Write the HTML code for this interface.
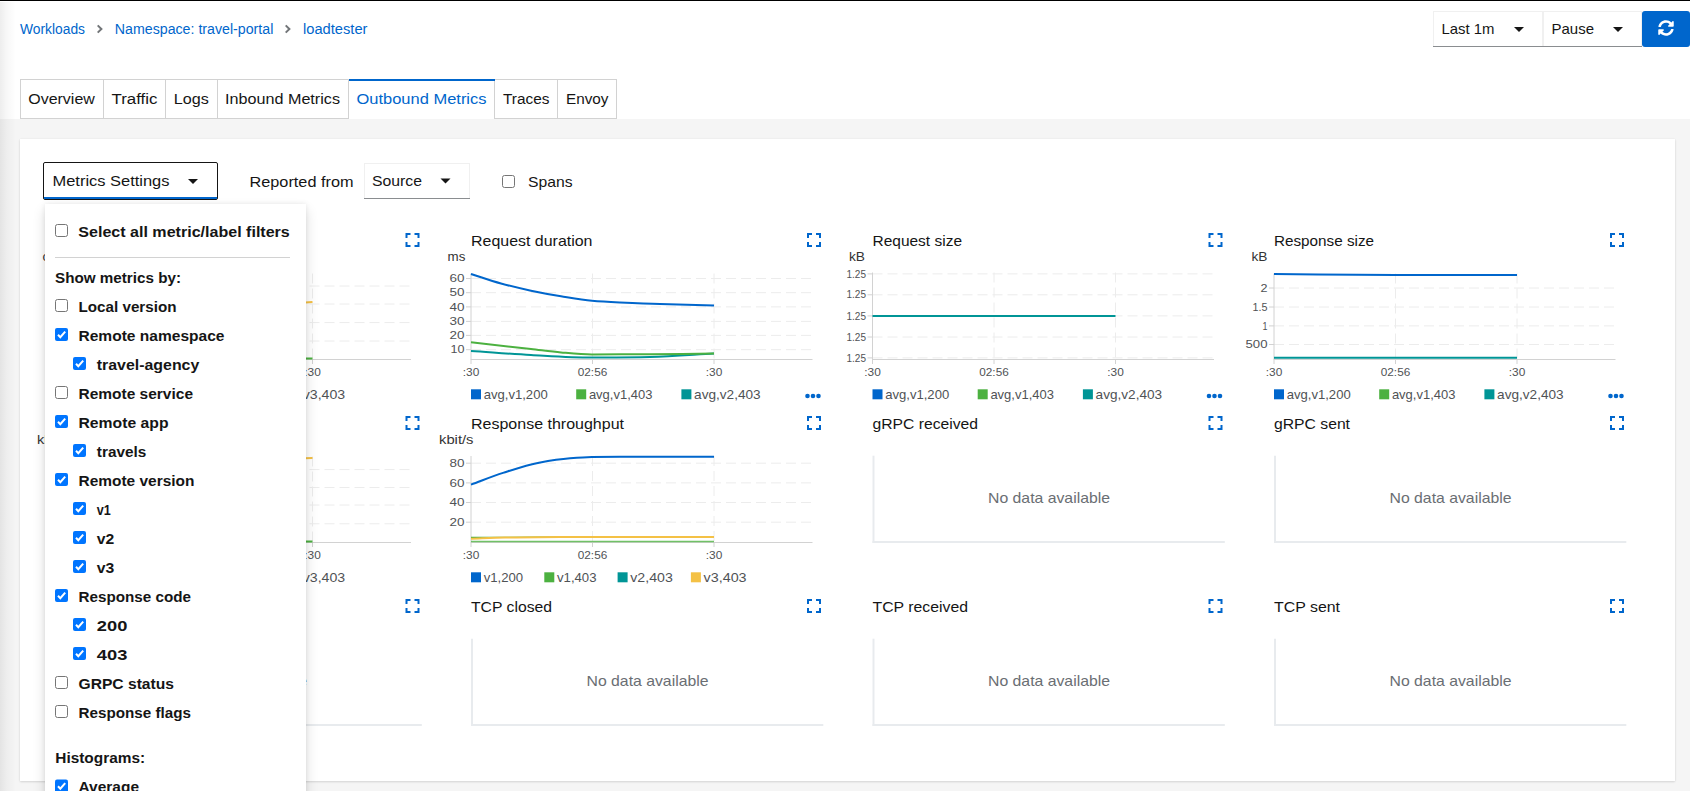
<!DOCTYPE html>
<html><head><meta charset="utf-8"><style>
html,body{margin:0;padding:0;width:1690px;height:791px;overflow:hidden;background:#fff;font-family:"Liberation Sans", sans-serif;}
.a{position:absolute;}
svg text{font-family:"Liberation Sans", sans-serif;}
</style></head><body>
<div class="a" style="left:0;top:119px;width:1690px;height:672px;background:#f5f5f5"></div>
<div class="a" style="left:20px;top:139px;width:1655px;height:642px;background:#fff;box-shadow:0 1px 2px rgba(3,3,3,.12),0 0 2px rgba(3,3,3,.06)"></div>
<svg class="a" style="left:0;top:0" width="1690" height="791" viewBox="0 0 1690 791">
<text x="20.0" y="33.8" font-size="14" fill="#0066cc" textLength="65.0" lengthAdjust="spacingAndGlyphs">Workloads</text>
<path d="M97.7 25.4L101.4 29.0L97.7 32.6" stroke="#737679" stroke-width="2" fill="none"/>
<text x="114.8" y="33.8" font-size="14" fill="#0066cc" textLength="158.5" lengthAdjust="spacingAndGlyphs">Namespace: travel-portal</text>
<path d="M285.7 25.4L289.4 29.0L285.7 32.6" stroke="#737679" stroke-width="2" fill="none"/>
<text x="303.0" y="33.8" font-size="14" fill="#0066cc" textLength="64.5" lengthAdjust="spacingAndGlyphs">loadtester</text>
<rect x="1433.5" y="11.5" width="109" height="35" fill="#fff" stroke="#f0f0f0" stroke-width="1"/>
<line x1="1433" y1="46.5" x2="1543" y2="46.5" stroke="#8a8d90" stroke-width="1"/>
<text x="1441.5" y="34.0" font-size="15" fill="#151515" textLength="53.0" lengthAdjust="spacingAndGlyphs">Last 1m</text>
<path d="M1514.0 27.0H1524.0L1519.0 32.0Z" fill="#151515"/>
<rect x="1543.5" y="11.5" width="98" height="35" fill="#fff" stroke="#f0f0f0" stroke-width="1"/>
<line x1="1543" y1="46.5" x2="1642" y2="46.5" stroke="#8a8d90" stroke-width="1"/>
<text x="1551.5" y="34.0" font-size="15" fill="#151515" textLength="42.5" lengthAdjust="spacingAndGlyphs">Pause</text>
<path d="M1613.0 27.0H1623.0L1618.0 32.0Z" fill="#151515"/>
<path d="M1645 11H1687Q1690 11 1690 14V44Q1690 47 1687 47H1645Q1642 47 1642 44V14Q1642 11 1645 11Z" fill="#0066cc"/>
<g transform="translate(1658 20) scale(0.03125)"><path fill="#fff" d="M370.72 133.28C339.458 104.008 298.888 87.962 255.848 88c-77.458.068-144.328 53.178-162.791 126.85-1.344 5.363-6.122 9.15-11.651 9.15H24.103c-7.498 0-13.194-6.807-11.807-14.176C33.933 94.924 134.813 8 256 8c66.448 0 126.791 26.136 171.315 68.685L463.03 40.97C478.149 25.851 504 36.559 504 57.941V192c0 13.255-10.745 24-24 24H345.941c-21.382 0-32.09-25.851-16.971-40.971l41.75-41.749zM32 296h134.059c21.382 0 32.09 25.851 16.971 40.971l-41.75 41.75c31.262 29.273 71.835 45.319 114.876 45.28 77.418-.07 144.315-53.144 162.787-126.849 1.344-5.363 6.122-9.15 11.651-9.15h57.304c7.498 0 13.193 6.807 11.807 14.176C478.067 417.076 377.187 504 256 504c-66.448 0-126.791-26.136-171.315-68.685L48.97 471.03C33.851 486.149 8 475.441 8 454.059V320c0-13.255 10.745-24 24-24z"/></g>
<rect x="20.5" y="79.5" width="83" height="39" fill="#fff" stroke="#d2d2d2" stroke-width="1"/>
<rect x="103.5" y="79.5" width="62" height="39" fill="#fff" stroke="#d2d2d2" stroke-width="1"/>
<rect x="165.5" y="79.5" width="52" height="39" fill="#fff" stroke="#d2d2d2" stroke-width="1"/>
<rect x="217.5" y="79.5" width="131" height="39" fill="#fff" stroke="#d2d2d2" stroke-width="1"/>
<rect x="348.5" y="79" width="146" height="40" fill="#fff"/>
<line x1="348.5" y1="79.5" x2="348.5" y2="119" stroke="#d2d2d2" stroke-width="1"/>
<line x1="494.5" y1="79.5" x2="494.5" y2="119" stroke="#d2d2d2" stroke-width="1"/>
<rect x="494.5" y="79.5" width="63" height="39" fill="#fff" stroke="#d2d2d2" stroke-width="1"/>
<rect x="557.5" y="79.5" width="59" height="39" fill="#fff" stroke="#d2d2d2" stroke-width="1"/>
<text x="28.3" y="104.0" font-size="15.5" fill="#151515" textLength="66.5" lengthAdjust="spacingAndGlyphs">Overview</text>
<text x="111.5" y="104.0" font-size="15.5" fill="#151515" textLength="46.0" lengthAdjust="spacingAndGlyphs">Traffic</text>
<text x="173.8" y="104.0" font-size="15.5" fill="#151515" textLength="35.0" lengthAdjust="spacingAndGlyphs">Logs</text>
<text x="225.0" y="104.0" font-size="15.5" fill="#151515" textLength="115.0" lengthAdjust="spacingAndGlyphs">Inbound Metrics</text>
<rect x="349" y="79" width="146" height="2" fill="#0066cc"/>
<text x="356.5" y="104.0" font-size="15.5" fill="#0066cc" textLength="130.0" lengthAdjust="spacingAndGlyphs">Outbound Metrics</text>
<text x="503.0" y="104.0" font-size="15.5" fill="#151515" textLength="46.5" lengthAdjust="spacingAndGlyphs">Traces</text>
<text x="566.0" y="104.0" font-size="15.5" fill="#151515" textLength="42.5" lengthAdjust="spacingAndGlyphs">Envoy</text>
<rect x="43.5" y="162.5" width="174" height="37" fill="#fff" stroke="#151515" stroke-width="1" rx="1.5"/>
<rect x="44" y="197" width="173" height="2" fill="#0066cc"/>
<text x="52.5" y="185.7" font-size="15" fill="#151515" textLength="117.0" lengthAdjust="spacingAndGlyphs">Metrics Settings</text>
<path d="M188.0 179.0H198.0L193.0 184.0Z" fill="#151515"/>
<text x="249.5" y="187.3" font-size="15" fill="#151515" textLength="104.0" lengthAdjust="spacingAndGlyphs">Reported from</text>
<rect x="364.5" y="163.5" width="105" height="35" fill="#fff" stroke="#f0f0f0" stroke-width="1"/>
<line x1="364" y1="198.5" x2="470" y2="198.5" stroke="#8a8d90" stroke-width="1"/>
<text x="372.0" y="186.0" font-size="15" fill="#151515" textLength="50.0" lengthAdjust="spacingAndGlyphs">Source</text>
<path d="M440.5 178.5H450.5L445.5 183.5Z" fill="#151515"/>
<rect x="502.5" y="175.5" width="12" height="12" fill="#fff" stroke="#767676" stroke-width="1" rx="2"/>
<text x="528.0" y="187.3" font-size="15" fill="#151515" textLength="44.5" lengthAdjust="spacingAndGlyphs">Spans</text>
<text x="69.5" y="246.0" font-size="15" fill="#151515" textLength="116.0" lengthAdjust="spacingAndGlyphs">Request volume</text>
<path d="M406.5 238V234H410.5M414.5 234H418.5V238M418.5 242V246H414.5M410.5 246H406.5V242" stroke="#0066cc" stroke-width="2" fill="none"/>
<text x="42.5" y="261.0" font-size="13" fill="#333" textLength="21.0" lengthAdjust="spacingAndGlyphs">ops</text>
<line x1="69.5" y1="286" x2="409.5" y2="286" stroke="#ececec" stroke-width="1" stroke-dasharray="10,5"/>
<line x1="64.5" y1="286" x2="69.5" y2="286" stroke="#d2d2d2" stroke-width="1"/>
<text x="63.0" y="289.6" font-size="11" fill="#4f5255" text-anchor="end" textLength="8.0" lengthAdjust="spacingAndGlyphs">4</text>
<line x1="69.5" y1="304" x2="409.5" y2="304" stroke="#ececec" stroke-width="1" stroke-dasharray="10,5"/>
<line x1="64.5" y1="304" x2="69.5" y2="304" stroke="#d2d2d2" stroke-width="1"/>
<text x="63.0" y="307.6" font-size="11" fill="#4f5255" text-anchor="end" textLength="8.0" lengthAdjust="spacingAndGlyphs">3</text>
<line x1="69.5" y1="322.6" x2="409.5" y2="322.6" stroke="#ececec" stroke-width="1" stroke-dasharray="10,5"/>
<line x1="64.5" y1="322.6" x2="69.5" y2="322.6" stroke="#d2d2d2" stroke-width="1"/>
<text x="63.0" y="326.2" font-size="11" fill="#4f5255" text-anchor="end" textLength="8.0" lengthAdjust="spacingAndGlyphs">2</text>
<line x1="69.5" y1="341" x2="409.5" y2="341" stroke="#ececec" stroke-width="1" stroke-dasharray="10,5"/>
<line x1="64.5" y1="341" x2="69.5" y2="341" stroke="#d2d2d2" stroke-width="1"/>
<text x="63.0" y="344.6" font-size="11" fill="#4f5255" text-anchor="end" textLength="8.0" lengthAdjust="spacingAndGlyphs">1</text>
<line x1="191.0" y1="273.5" x2="191.0" y2="359" stroke="#ececec" stroke-width="1" stroke-dasharray="10,5"/>
<line x1="312.5" y1="273.5" x2="312.5" y2="359" stroke="#ececec" stroke-width="1" stroke-dasharray="10,5"/>
<line x1="69.5" y1="273.5" x2="69.5" y2="359.5" stroke="#d2d2d2" stroke-width="1"/>
<line x1="69.5" y1="359.5" x2="411.0" y2="359.5" stroke="#d2d2d2" stroke-width="1"/>
<line x1="69.5" y1="359" x2="69.5" y2="364" stroke="#d2d2d2" stroke-width="1"/>
<line x1="191.0" y1="359" x2="191.0" y2="364" stroke="#d2d2d2" stroke-width="1"/>
<line x1="312.5" y1="359" x2="312.5" y2="364" stroke="#d2d2d2" stroke-width="1"/>
<text x="69.5" y="375.6" font-size="11" fill="#4f5255" text-anchor="middle" textLength="16.5" lengthAdjust="spacingAndGlyphs">:30</text>
<text x="191.0" y="375.6" font-size="11" fill="#4f5255" text-anchor="middle" textLength="29.5" lengthAdjust="spacingAndGlyphs">02:56</text>
<text x="312.5" y="375.6" font-size="11" fill="#4f5255" text-anchor="middle" textLength="16.5" lengthAdjust="spacingAndGlyphs">:30</text>
<path d="M69.5 330.0C110.0 324.0 150.5 316.3 191.0 312.0C231.5 307.7 272.0 305.3 312.5 302.0" stroke="#f4c145" stroke-width="2" fill="none"/>
<path d="M69.5 358.5H312.5" stroke="#4cb140" stroke-width="2" fill="none"/>
<rect x="69.5" y="389.3" width="10" height="10" fill="#0066cc"/>
<text x="82.2" y="399.0" font-size="13" fill="#4f5255" textLength="39.0" lengthAdjust="spacingAndGlyphs">v1,200</text>
<rect x="143.0" y="389.3" width="10" height="10" fill="#4cb140"/>
<text x="155.7" y="399.0" font-size="13" fill="#4f5255" textLength="39.5" lengthAdjust="spacingAndGlyphs">v1,403</text>
<rect x="216.5" y="389.3" width="10" height="10" fill="#009596"/>
<text x="229.2" y="399.0" font-size="13" fill="#4f5255" textLength="42.0" lengthAdjust="spacingAndGlyphs">v2,403</text>
<rect x="290.0" y="389.3" width="10" height="10" fill="#f4c145"/>
<text x="302.7" y="399.0" font-size="13" fill="#4f5255" textLength="42.5" lengthAdjust="spacingAndGlyphs">v3,403</text>
<text x="471.0" y="246.0" font-size="15" fill="#151515" textLength="121.5" lengthAdjust="spacingAndGlyphs">Request duration</text>
<path d="M808 238V234H812M816 234H820V238M820 242V246H816M812 246H808V242" stroke="#0066cc" stroke-width="2" fill="none"/>
<text x="447.6" y="261.0" font-size="13" fill="#333" textLength="17.8" lengthAdjust="spacingAndGlyphs">ms</text>
<line x1="471" y1="278.5" x2="811" y2="278.5" stroke="#ececec" stroke-width="1" stroke-dasharray="10,5"/>
<line x1="466" y1="278.5" x2="471" y2="278.5" stroke="#d2d2d2" stroke-width="1"/>
<text x="464.5" y="282.1" font-size="11" fill="#4f5255" text-anchor="end" textLength="15.0" lengthAdjust="spacingAndGlyphs">60</text>
<line x1="471" y1="292.7" x2="811" y2="292.7" stroke="#ececec" stroke-width="1" stroke-dasharray="10,5"/>
<line x1="466" y1="292.7" x2="471" y2="292.7" stroke="#d2d2d2" stroke-width="1"/>
<text x="464.5" y="296.3" font-size="11" fill="#4f5255" text-anchor="end" textLength="15.0" lengthAdjust="spacingAndGlyphs">50</text>
<line x1="471" y1="306.9" x2="811" y2="306.9" stroke="#ececec" stroke-width="1" stroke-dasharray="10,5"/>
<line x1="466" y1="306.9" x2="471" y2="306.9" stroke="#d2d2d2" stroke-width="1"/>
<text x="464.5" y="310.5" font-size="11" fill="#4f5255" text-anchor="end" textLength="15.0" lengthAdjust="spacingAndGlyphs">40</text>
<line x1="471" y1="321.4" x2="811" y2="321.4" stroke="#ececec" stroke-width="1" stroke-dasharray="10,5"/>
<line x1="466" y1="321.4" x2="471" y2="321.4" stroke="#d2d2d2" stroke-width="1"/>
<text x="464.5" y="325.0" font-size="11" fill="#4f5255" text-anchor="end" textLength="15.0" lengthAdjust="spacingAndGlyphs">30</text>
<line x1="471" y1="335.4" x2="811" y2="335.4" stroke="#ececec" stroke-width="1" stroke-dasharray="10,5"/>
<line x1="466" y1="335.4" x2="471" y2="335.4" stroke="#d2d2d2" stroke-width="1"/>
<text x="464.5" y="339.0" font-size="11" fill="#4f5255" text-anchor="end" textLength="15.0" lengthAdjust="spacingAndGlyphs">20</text>
<line x1="471" y1="349.7" x2="811" y2="349.7" stroke="#ececec" stroke-width="1" stroke-dasharray="10,5"/>
<line x1="466" y1="349.7" x2="471" y2="349.7" stroke="#d2d2d2" stroke-width="1"/>
<text x="464.5" y="353.3" font-size="11" fill="#4f5255" text-anchor="end" textLength="14.0" lengthAdjust="spacingAndGlyphs">10</text>
<line x1="592.5" y1="273.5" x2="592.5" y2="359" stroke="#ececec" stroke-width="1" stroke-dasharray="10,5"/>
<line x1="714" y1="273.5" x2="714" y2="359" stroke="#ececec" stroke-width="1" stroke-dasharray="10,5"/>
<line x1="471" y1="273.5" x2="471" y2="359.5" stroke="#d2d2d2" stroke-width="1"/>
<line x1="471" y1="359.5" x2="812.5" y2="359.5" stroke="#d2d2d2" stroke-width="1"/>
<line x1="471" y1="359" x2="471" y2="364" stroke="#d2d2d2" stroke-width="1"/>
<line x1="592.5" y1="359" x2="592.5" y2="364" stroke="#d2d2d2" stroke-width="1"/>
<line x1="714" y1="359" x2="714" y2="364" stroke="#d2d2d2" stroke-width="1"/>
<text x="471.0" y="375.6" font-size="11" fill="#4f5255" text-anchor="middle" textLength="16.5" lengthAdjust="spacingAndGlyphs">:30</text>
<text x="592.5" y="375.6" font-size="11" fill="#4f5255" text-anchor="middle" textLength="29.5" lengthAdjust="spacingAndGlyphs">02:56</text>
<text x="714.0" y="375.6" font-size="11" fill="#4f5255" text-anchor="middle" textLength="16.5" lengthAdjust="spacingAndGlyphs">:30</text>
<path d="M471.0 274.0C481.0 277.2 491.0 280.8 501.0 283.5C511.0 286.2 521.0 288.6 531.0 290.7C541.0 292.8 551.0 294.7 561.0 296.3C571.3 298.0 581.7 300.0 592.0 300.8C601.3 301.6 610.7 302.0 620.0 302.4C633.3 303.0 646.7 303.6 660.0 304.0C678.0 304.6 696.0 305.0 714.0 305.5" stroke="#0066cc" stroke-width="2" fill="none"/>
<path d="M471.0 351.0C491.0 352.3 511.0 354.0 531.0 355.0C551.3 356.1 571.7 357.6 592.0 357.6C611.3 357.6 630.7 357.3 650.0 357.0C671.3 356.6 692.7 354.7 714.0 353.5" stroke="#009596" stroke-width="2" fill="none"/>
<path d="M471.0 342.3C491.0 344.5 511.0 346.7 531.0 349.0C541.0 350.1 551.0 351.6 561.0 352.4C571.3 353.3 581.7 354.4 592.0 354.4C611.3 354.4 630.7 354.3 650.0 354.2C671.3 354.1 692.7 353.7 714.0 353.5" stroke="#4cb140" stroke-width="2" fill="none"/>
<rect x="471.0" y="389.3" width="10" height="10" fill="#0066cc"/>
<text x="483.7" y="399.0" font-size="13" fill="#4f5255" textLength="64.0" lengthAdjust="spacingAndGlyphs">avg,v1,200</text>
<rect x="576.2" y="389.3" width="10" height="10" fill="#4cb140"/>
<text x="588.9" y="399.0" font-size="13" fill="#4f5255" textLength="63.5" lengthAdjust="spacingAndGlyphs">avg,v1,403</text>
<rect x="681.4" y="389.3" width="10" height="10" fill="#009596"/>
<text x="694.1" y="399.0" font-size="13" fill="#4f5255" textLength="66.5" lengthAdjust="spacingAndGlyphs">avg,v2,403</text>
<circle cx="807.5" cy="396" r="2.3" fill="#0066cc"/>
<circle cx="813.0" cy="396" r="2.3" fill="#0066cc"/>
<circle cx="818.5" cy="396" r="2.3" fill="#0066cc"/>
<text x="872.5" y="246.0" font-size="15" fill="#151515" textLength="89.5" lengthAdjust="spacingAndGlyphs">Request size</text>
<path d="M1209.5 238V234H1213.5M1217.5 234H1221.5V238M1221.5 242V246H1217.5M1213.5 246H1209.5V242" stroke="#0066cc" stroke-width="2" fill="none"/>
<text x="849.0" y="261.0" font-size="13" fill="#333" textLength="16.0" lengthAdjust="spacingAndGlyphs">kB</text>
<line x1="872.5" y1="273.9" x2="1212.5" y2="273.9" stroke="#ececec" stroke-width="1" stroke-dasharray="10,5"/>
<line x1="867.5" y1="273.9" x2="872.5" y2="273.9" stroke="#d2d2d2" stroke-width="1"/>
<text x="866.0" y="277.5" font-size="11" fill="#4f5255" text-anchor="end" textLength="19.5" lengthAdjust="spacingAndGlyphs">1.25</text>
<line x1="872.5" y1="294.8" x2="1212.5" y2="294.8" stroke="#ececec" stroke-width="1" stroke-dasharray="10,5"/>
<line x1="867.5" y1="294.8" x2="872.5" y2="294.8" stroke="#d2d2d2" stroke-width="1"/>
<text x="866.0" y="298.4" font-size="11" fill="#4f5255" text-anchor="end" textLength="19.5" lengthAdjust="spacingAndGlyphs">1.25</text>
<line x1="872.5" y1="315.9" x2="1212.5" y2="315.9" stroke="#ececec" stroke-width="1" stroke-dasharray="10,5"/>
<line x1="867.5" y1="315.9" x2="872.5" y2="315.9" stroke="#d2d2d2" stroke-width="1"/>
<text x="866.0" y="319.5" font-size="11" fill="#4f5255" text-anchor="end" textLength="19.5" lengthAdjust="spacingAndGlyphs">1.25</text>
<line x1="872.5" y1="337" x2="1212.5" y2="337" stroke="#ececec" stroke-width="1" stroke-dasharray="10,5"/>
<line x1="867.5" y1="337" x2="872.5" y2="337" stroke="#d2d2d2" stroke-width="1"/>
<text x="866.0" y="340.6" font-size="11" fill="#4f5255" text-anchor="end" textLength="19.5" lengthAdjust="spacingAndGlyphs">1.25</text>
<line x1="872.5" y1="357.9" x2="1212.5" y2="357.9" stroke="#ececec" stroke-width="1" stroke-dasharray="10,5"/>
<line x1="867.5" y1="357.9" x2="872.5" y2="357.9" stroke="#d2d2d2" stroke-width="1"/>
<text x="866.0" y="361.5" font-size="11" fill="#4f5255" text-anchor="end" textLength="19.5" lengthAdjust="spacingAndGlyphs">1.25</text>
<line x1="994.0" y1="272.5" x2="994.0" y2="359" stroke="#ececec" stroke-width="1" stroke-dasharray="10,5"/>
<line x1="1115.5" y1="272.5" x2="1115.5" y2="359" stroke="#ececec" stroke-width="1" stroke-dasharray="10,5"/>
<line x1="872.5" y1="272.5" x2="872.5" y2="359.5" stroke="#d2d2d2" stroke-width="1"/>
<line x1="872.5" y1="359.5" x2="1214.0" y2="359.5" stroke="#d2d2d2" stroke-width="1"/>
<line x1="872.5" y1="359" x2="872.5" y2="364" stroke="#d2d2d2" stroke-width="1"/>
<line x1="994.0" y1="359" x2="994.0" y2="364" stroke="#d2d2d2" stroke-width="1"/>
<line x1="1115.5" y1="359" x2="1115.5" y2="364" stroke="#d2d2d2" stroke-width="1"/>
<text x="872.5" y="375.6" font-size="11" fill="#4f5255" text-anchor="middle" textLength="16.5" lengthAdjust="spacingAndGlyphs">:30</text>
<text x="994.0" y="375.6" font-size="11" fill="#4f5255" text-anchor="middle" textLength="29.5" lengthAdjust="spacingAndGlyphs">02:56</text>
<text x="1115.5" y="375.6" font-size="11" fill="#4f5255" text-anchor="middle" textLength="16.5" lengthAdjust="spacingAndGlyphs">:30</text>
<path d="M872.5 315.9H1115.5" stroke="#009596" stroke-width="2" fill="none"/>
<rect x="872.5" y="389.3" width="10" height="10" fill="#0066cc"/>
<text x="885.2" y="399.0" font-size="13" fill="#4f5255" textLength="64.0" lengthAdjust="spacingAndGlyphs">avg,v1,200</text>
<rect x="977.7" y="389.3" width="10" height="10" fill="#4cb140"/>
<text x="990.4" y="399.0" font-size="13" fill="#4f5255" textLength="63.5" lengthAdjust="spacingAndGlyphs">avg,v1,403</text>
<rect x="1082.9" y="389.3" width="10" height="10" fill="#009596"/>
<text x="1095.6" y="399.0" font-size="13" fill="#4f5255" textLength="66.5" lengthAdjust="spacingAndGlyphs">avg,v2,403</text>
<circle cx="1209.0" cy="396" r="2.3" fill="#0066cc"/>
<circle cx="1214.5" cy="396" r="2.3" fill="#0066cc"/>
<circle cx="1220.0" cy="396" r="2.3" fill="#0066cc"/>
<text x="1274.0" y="246.0" font-size="15" fill="#151515" textLength="100.0" lengthAdjust="spacingAndGlyphs">Response size</text>
<path d="M1611 238V234H1615M1619 234H1623V238M1623 242V246H1619M1615 246H1611V242" stroke="#0066cc" stroke-width="2" fill="none"/>
<text x="1251.5" y="261.0" font-size="13" fill="#333" textLength="16.0" lengthAdjust="spacingAndGlyphs">kB</text>
<line x1="1274" y1="288" x2="1614" y2="288" stroke="#ececec" stroke-width="1" stroke-dasharray="10,5"/>
<line x1="1269" y1="288" x2="1274" y2="288" stroke="#d2d2d2" stroke-width="1"/>
<text x="1267.5" y="291.6" font-size="11" fill="#4f5255" text-anchor="end" textLength="7.0" lengthAdjust="spacingAndGlyphs">2</text>
<line x1="1274" y1="307" x2="1614" y2="307" stroke="#ececec" stroke-width="1" stroke-dasharray="10,5"/>
<line x1="1269" y1="307" x2="1274" y2="307" stroke="#d2d2d2" stroke-width="1"/>
<text x="1267.5" y="310.6" font-size="11" fill="#4f5255" text-anchor="end" textLength="15.0" lengthAdjust="spacingAndGlyphs">1.5</text>
<line x1="1274" y1="325.9" x2="1614" y2="325.9" stroke="#ececec" stroke-width="1" stroke-dasharray="10,5"/>
<line x1="1269" y1="325.9" x2="1274" y2="325.9" stroke="#d2d2d2" stroke-width="1"/>
<text x="1267.5" y="329.5" font-size="11" fill="#4f5255" text-anchor="end" textLength="5.0" lengthAdjust="spacingAndGlyphs">1</text>
<line x1="1274" y1="344.5" x2="1614" y2="344.5" stroke="#ececec" stroke-width="1" stroke-dasharray="10,5"/>
<line x1="1269" y1="344.5" x2="1274" y2="344.5" stroke="#d2d2d2" stroke-width="1"/>
<text x="1267.5" y="348.1" font-size="11" fill="#4f5255" text-anchor="end" textLength="22.0" lengthAdjust="spacingAndGlyphs">500</text>
<line x1="1395.5" y1="273.5" x2="1395.5" y2="359" stroke="#ececec" stroke-width="1" stroke-dasharray="10,5"/>
<line x1="1517" y1="273.5" x2="1517" y2="359" stroke="#ececec" stroke-width="1" stroke-dasharray="10,5"/>
<line x1="1274" y1="273.5" x2="1274" y2="359.5" stroke="#d2d2d2" stroke-width="1"/>
<line x1="1274" y1="359.5" x2="1615.5" y2="359.5" stroke="#d2d2d2" stroke-width="1"/>
<line x1="1274" y1="359" x2="1274" y2="364" stroke="#d2d2d2" stroke-width="1"/>
<line x1="1395.5" y1="359" x2="1395.5" y2="364" stroke="#d2d2d2" stroke-width="1"/>
<line x1="1517" y1="359" x2="1517" y2="364" stroke="#d2d2d2" stroke-width="1"/>
<text x="1274.0" y="375.6" font-size="11" fill="#4f5255" text-anchor="middle" textLength="16.5" lengthAdjust="spacingAndGlyphs">:30</text>
<text x="1395.5" y="375.6" font-size="11" fill="#4f5255" text-anchor="middle" textLength="29.5" lengthAdjust="spacingAndGlyphs">02:56</text>
<text x="1517.0" y="375.6" font-size="11" fill="#4f5255" text-anchor="middle" textLength="16.5" lengthAdjust="spacingAndGlyphs">:30</text>
<path d="M1274.0 274.0C1314.5 274.3 1355.0 275.0 1395.5 275.0C1436.0 275.0 1476.5 275.0 1517.0 275.0" stroke="#0066cc" stroke-width="2" fill="none"/>
<path d="M1274 357.7H1517" stroke="#009596" stroke-width="2" fill="none"/>
<rect x="1274.0" y="389.3" width="10" height="10" fill="#0066cc"/>
<text x="1286.7" y="399.0" font-size="13" fill="#4f5255" textLength="64.0" lengthAdjust="spacingAndGlyphs">avg,v1,200</text>
<rect x="1379.2" y="389.3" width="10" height="10" fill="#4cb140"/>
<text x="1391.9" y="399.0" font-size="13" fill="#4f5255" textLength="63.5" lengthAdjust="spacingAndGlyphs">avg,v1,403</text>
<rect x="1484.4" y="389.3" width="10" height="10" fill="#009596"/>
<text x="1497.1" y="399.0" font-size="13" fill="#4f5255" textLength="66.5" lengthAdjust="spacingAndGlyphs">avg,v2,403</text>
<circle cx="1610.5" cy="396" r="2.3" fill="#0066cc"/>
<circle cx="1616.0" cy="396" r="2.3" fill="#0066cc"/>
<circle cx="1621.5" cy="396" r="2.3" fill="#0066cc"/>
<text x="69.5" y="429.0" font-size="15" fill="#151515" textLength="141.0" lengthAdjust="spacingAndGlyphs">Request throughput</text>
<path d="M406.5 421V417H410.5M414.5 417H418.5V421M418.5 425V429H414.5M410.5 429H406.5V425" stroke="#0066cc" stroke-width="2" fill="none"/>
<text x="37.0" y="444.0" font-size="13" fill="#333" textLength="34.0" lengthAdjust="spacingAndGlyphs">kbit/s</text>
<line x1="69.5" y1="469.6" x2="409.5" y2="469.6" stroke="#ececec" stroke-width="1" stroke-dasharray="10,5"/>
<line x1="64.5" y1="469.6" x2="69.5" y2="469.6" stroke="#d2d2d2" stroke-width="1"/>
<text x="63.0" y="473.2" font-size="11" fill="#4f5255" text-anchor="end" textLength="8.0" lengthAdjust="spacingAndGlyphs">8</text>
<line x1="69.5" y1="487.5" x2="409.5" y2="487.5" stroke="#ececec" stroke-width="1" stroke-dasharray="10,5"/>
<line x1="64.5" y1="487.5" x2="69.5" y2="487.5" stroke="#d2d2d2" stroke-width="1"/>
<text x="63.0" y="491.1" font-size="11" fill="#4f5255" text-anchor="end" textLength="8.0" lengthAdjust="spacingAndGlyphs">6</text>
<line x1="69.5" y1="505" x2="409.5" y2="505" stroke="#ececec" stroke-width="1" stroke-dasharray="10,5"/>
<line x1="64.5" y1="505" x2="69.5" y2="505" stroke="#d2d2d2" stroke-width="1"/>
<text x="63.0" y="508.6" font-size="11" fill="#4f5255" text-anchor="end" textLength="8.0" lengthAdjust="spacingAndGlyphs">4</text>
<line x1="69.5" y1="523.75" x2="409.5" y2="523.75" stroke="#ececec" stroke-width="1" stroke-dasharray="10,5"/>
<line x1="64.5" y1="523.75" x2="69.5" y2="523.75" stroke="#d2d2d2" stroke-width="1"/>
<text x="63.0" y="527.4" font-size="11" fill="#4f5255" text-anchor="end" textLength="8.0" lengthAdjust="spacingAndGlyphs">2</text>
<line x1="191.0" y1="456.5" x2="191.0" y2="542" stroke="#ececec" stroke-width="1" stroke-dasharray="10,5"/>
<line x1="312.5" y1="456.5" x2="312.5" y2="542" stroke="#ececec" stroke-width="1" stroke-dasharray="10,5"/>
<line x1="69.5" y1="456.5" x2="69.5" y2="542.5" stroke="#d2d2d2" stroke-width="1"/>
<line x1="69.5" y1="542.5" x2="411.0" y2="542.5" stroke="#d2d2d2" stroke-width="1"/>
<line x1="69.5" y1="542" x2="69.5" y2="547" stroke="#d2d2d2" stroke-width="1"/>
<line x1="191.0" y1="542" x2="191.0" y2="547" stroke="#d2d2d2" stroke-width="1"/>
<line x1="312.5" y1="542" x2="312.5" y2="547" stroke="#d2d2d2" stroke-width="1"/>
<text x="69.5" y="558.6" font-size="11" fill="#4f5255" text-anchor="middle" textLength="16.5" lengthAdjust="spacingAndGlyphs">:30</text>
<text x="191.0" y="558.6" font-size="11" fill="#4f5255" text-anchor="middle" textLength="29.5" lengthAdjust="spacingAndGlyphs">02:56</text>
<text x="312.5" y="558.6" font-size="11" fill="#4f5255" text-anchor="middle" textLength="16.5" lengthAdjust="spacingAndGlyphs">:30</text>
<path d="M69.5 483.0C110.0 476.3 150.5 465.7 191.0 463.0C231.5 460.3 272.0 459.7 312.5 458.0" stroke="#f4c145" stroke-width="2" fill="none"/>
<path d="M69.5 541.5H312.5" stroke="#4cb140" stroke-width="2" fill="none"/>
<rect x="69.5" y="572.3" width="10" height="10" fill="#0066cc"/>
<text x="82.2" y="582.0" font-size="13" fill="#4f5255" textLength="39.0" lengthAdjust="spacingAndGlyphs">v1,200</text>
<rect x="143.0" y="572.3" width="10" height="10" fill="#4cb140"/>
<text x="155.7" y="582.0" font-size="13" fill="#4f5255" textLength="39.5" lengthAdjust="spacingAndGlyphs">v1,403</text>
<rect x="216.5" y="572.3" width="10" height="10" fill="#009596"/>
<text x="229.2" y="582.0" font-size="13" fill="#4f5255" textLength="42.0" lengthAdjust="spacingAndGlyphs">v2,403</text>
<rect x="290.0" y="572.3" width="10" height="10" fill="#f4c145"/>
<text x="302.7" y="582.0" font-size="13" fill="#4f5255" textLength="42.5" lengthAdjust="spacingAndGlyphs">v3,403</text>
<text x="471.0" y="429.0" font-size="15" fill="#151515" textLength="153.0" lengthAdjust="spacingAndGlyphs">Response throughput</text>
<path d="M808 421V417H812M816 417H820V421M820 425V429H816M812 429H808V425" stroke="#0066cc" stroke-width="2" fill="none"/>
<text x="439.0" y="444.0" font-size="13" fill="#333" textLength="34.5" lengthAdjust="spacingAndGlyphs">kbit/s</text>
<line x1="471" y1="463.2" x2="811" y2="463.2" stroke="#ececec" stroke-width="1" stroke-dasharray="10,5"/>
<line x1="466" y1="463.2" x2="471" y2="463.2" stroke="#d2d2d2" stroke-width="1"/>
<text x="464.5" y="466.8" font-size="11" fill="#4f5255" text-anchor="end" textLength="15.0" lengthAdjust="spacingAndGlyphs">80</text>
<line x1="471" y1="482.9" x2="811" y2="482.9" stroke="#ececec" stroke-width="1" stroke-dasharray="10,5"/>
<line x1="466" y1="482.9" x2="471" y2="482.9" stroke="#d2d2d2" stroke-width="1"/>
<text x="464.5" y="486.5" font-size="11" fill="#4f5255" text-anchor="end" textLength="15.0" lengthAdjust="spacingAndGlyphs">60</text>
<line x1="471" y1="502.5" x2="811" y2="502.5" stroke="#ececec" stroke-width="1" stroke-dasharray="10,5"/>
<line x1="466" y1="502.5" x2="471" y2="502.5" stroke="#d2d2d2" stroke-width="1"/>
<text x="464.5" y="506.1" font-size="11" fill="#4f5255" text-anchor="end" textLength="15.0" lengthAdjust="spacingAndGlyphs">40</text>
<line x1="471" y1="522.2" x2="811" y2="522.2" stroke="#ececec" stroke-width="1" stroke-dasharray="10,5"/>
<line x1="466" y1="522.2" x2="471" y2="522.2" stroke="#d2d2d2" stroke-width="1"/>
<text x="464.5" y="525.8" font-size="11" fill="#4f5255" text-anchor="end" textLength="15.0" lengthAdjust="spacingAndGlyphs">20</text>
<line x1="592.5" y1="456" x2="592.5" y2="542" stroke="#ececec" stroke-width="1" stroke-dasharray="10,5"/>
<line x1="714" y1="456" x2="714" y2="542" stroke="#ececec" stroke-width="1" stroke-dasharray="10,5"/>
<line x1="471" y1="456" x2="471" y2="542.5" stroke="#d2d2d2" stroke-width="1"/>
<line x1="471" y1="542.5" x2="812.5" y2="542.5" stroke="#d2d2d2" stroke-width="1"/>
<line x1="471" y1="542" x2="471" y2="547" stroke="#d2d2d2" stroke-width="1"/>
<line x1="592.5" y1="542" x2="592.5" y2="547" stroke="#d2d2d2" stroke-width="1"/>
<line x1="714" y1="542" x2="714" y2="547" stroke="#d2d2d2" stroke-width="1"/>
<text x="471.0" y="558.6" font-size="11" fill="#4f5255" text-anchor="middle" textLength="16.5" lengthAdjust="spacingAndGlyphs">:30</text>
<text x="592.5" y="558.6" font-size="11" fill="#4f5255" text-anchor="middle" textLength="29.5" lengthAdjust="spacingAndGlyphs">02:56</text>
<text x="714.0" y="558.6" font-size="11" fill="#4f5255" text-anchor="middle" textLength="16.5" lengthAdjust="spacingAndGlyphs">:30</text>
<path d="M471 541.5H714" stroke="#4cb140" stroke-width="1.5" fill="none" opacity="0.8"/>
<path d="M471.0 537.4C494.0 537.3 517.0 537.2 540.0 537.1C560.0 537.0 580.0 537.0 600.0 536.9" stroke="#4cb140" stroke-width="1.2" fill="none"/>
<path d="M471.0 538.8C482.3 538.4 493.7 537.8 505.0 537.6C523.3 537.3 541.7 537.0 560.0 537.0C611.3 536.9 662.7 536.9 714.0 536.9" stroke="#f4c145" stroke-width="2" fill="none"/>
<path d="M471.0 484.6C481.7 480.7 492.3 476.3 503.0 472.9C515.0 469.1 527.0 465.0 539.0 462.7C549.3 460.8 559.7 459.1 570.0 458.3C577.3 457.7 584.7 457.1 592.0 457.0C601.3 456.8 610.7 456.7 620.0 456.7C651.3 456.7 682.7 456.7 714.0 456.7" stroke="#0066cc" stroke-width="2" fill="none"/>
<rect x="471.0" y="572.3" width="10" height="10" fill="#0066cc"/>
<text x="483.7" y="582.0" font-size="13" fill="#4f5255" textLength="39.5" lengthAdjust="spacingAndGlyphs">v1,200</text>
<rect x="544.3" y="572.3" width="10" height="10" fill="#4cb140"/>
<text x="557.0" y="582.0" font-size="13" fill="#4f5255" textLength="39.5" lengthAdjust="spacingAndGlyphs">v1,403</text>
<rect x="617.6" y="572.3" width="10" height="10" fill="#009596"/>
<text x="630.3" y="582.0" font-size="13" fill="#4f5255" textLength="42.5" lengthAdjust="spacingAndGlyphs">v2,403</text>
<rect x="690.9" y="572.3" width="10" height="10" fill="#f4c145"/>
<text x="703.6" y="582.0" font-size="13" fill="#4f5255" textLength="43.0" lengthAdjust="spacingAndGlyphs">v3,403</text>
<text x="872.5" y="429.0" font-size="15" fill="#151515" textLength="105.5" lengthAdjust="spacingAndGlyphs">gRPC received</text>
<path d="M1209.5 421V417H1213.5M1217.5 417H1221.5V421M1221.5 425V429H1217.5M1213.5 429H1209.5V425" stroke="#0066cc" stroke-width="2" fill="none"/>
<line x1="873.5" y1="455.7" x2="873.5" y2="543" stroke="#e8ebee" stroke-width="2"/>
<line x1="872.5" y1="542" x2="1224.8" y2="542" stroke="#e8ebee" stroke-width="2"/>
<text x="1049.0" y="503.3" font-size="15" fill="#6a6e73" text-anchor="middle" textLength="122.0" lengthAdjust="spacingAndGlyphs">No data available</text>
<text x="1274.0" y="429.0" font-size="15" fill="#151515" textLength="76.0" lengthAdjust="spacingAndGlyphs">gRPC sent</text>
<path d="M1611 421V417H1615M1619 417H1623V421M1623 425V429H1619M1615 429H1611V425" stroke="#0066cc" stroke-width="2" fill="none"/>
<line x1="1275" y1="455.7" x2="1275" y2="543" stroke="#e8ebee" stroke-width="2"/>
<line x1="1274" y1="542" x2="1626.3" y2="542" stroke="#e8ebee" stroke-width="2"/>
<text x="1450.5" y="503.3" font-size="15" fill="#6a6e73" text-anchor="middle" textLength="122.0" lengthAdjust="spacingAndGlyphs">No data available</text>
<text x="69.5" y="612.0" font-size="15" fill="#151515" textLength="89.0" lengthAdjust="spacingAndGlyphs">TCP opened</text>
<path d="M406.5 604V600H410.5M414.5 600H418.5V604M418.5 608V612H414.5M410.5 612H406.5V608" stroke="#0066cc" stroke-width="2" fill="none"/>
<line x1="70.5" y1="638.7" x2="70.5" y2="726" stroke="#e8ebee" stroke-width="2"/>
<line x1="69.5" y1="725" x2="421.8" y2="725" stroke="#e8ebee" stroke-width="2"/>
<text x="246.0" y="686.3" font-size="15" fill="#6a6e73" text-anchor="middle" textLength="122.0" lengthAdjust="spacingAndGlyphs">No data available</text>
<text x="471.0" y="612.0" font-size="15" fill="#151515" textLength="81.0" lengthAdjust="spacingAndGlyphs">TCP closed</text>
<path d="M808 604V600H812M816 600H820V604M820 608V612H816M812 612H808V608" stroke="#0066cc" stroke-width="2" fill="none"/>
<line x1="472" y1="638.7" x2="472" y2="726" stroke="#e8ebee" stroke-width="2"/>
<line x1="471" y1="725" x2="823.3" y2="725" stroke="#e8ebee" stroke-width="2"/>
<text x="647.5" y="686.3" font-size="15" fill="#6a6e73" text-anchor="middle" textLength="122.0" lengthAdjust="spacingAndGlyphs">No data available</text>
<text x="872.5" y="612.0" font-size="15" fill="#151515" textLength="95.5" lengthAdjust="spacingAndGlyphs">TCP received</text>
<path d="M1209.5 604V600H1213.5M1217.5 600H1221.5V604M1221.5 608V612H1217.5M1213.5 612H1209.5V608" stroke="#0066cc" stroke-width="2" fill="none"/>
<line x1="873.5" y1="638.7" x2="873.5" y2="726" stroke="#e8ebee" stroke-width="2"/>
<line x1="872.5" y1="725" x2="1224.8" y2="725" stroke="#e8ebee" stroke-width="2"/>
<text x="1049.0" y="686.3" font-size="15" fill="#6a6e73" text-anchor="middle" textLength="122.0" lengthAdjust="spacingAndGlyphs">No data available</text>
<text x="1274.0" y="612.0" font-size="15" fill="#151515" textLength="66.0" lengthAdjust="spacingAndGlyphs">TCP sent</text>
<path d="M1611 604V600H1615M1619 600H1623V604M1623 608V612H1619M1615 612H1611V608" stroke="#0066cc" stroke-width="2" fill="none"/>
<line x1="1275" y1="638.7" x2="1275" y2="726" stroke="#e8ebee" stroke-width="2"/>
<line x1="1274" y1="725" x2="1626.3" y2="725" stroke="#e8ebee" stroke-width="2"/>
<text x="1450.5" y="686.3" font-size="15" fill="#6a6e73" text-anchor="middle" textLength="122.0" lengthAdjust="spacingAndGlyphs">No data available</text>
</svg>
<div class="a" style="left:45px;top:204px;width:261px;height:700px;background:#fff;box-shadow:0 6px 12px rgba(3,3,3,.14),0 0 5px rgba(3,3,3,.08)"></div>
<svg class="a" style="left:0;top:0" width="1690" height="791" viewBox="0 0 1690 791">
<text x="78.3" y="237.0" font-size="15" font-weight="700" fill="#151515" textLength="211.5" lengthAdjust="spacingAndGlyphs">Select all metric/label filters</text>
<rect x="55.5" y="224.5" width="12" height="12" rx="2" fill="#fff" stroke="#767676"/>
<line x1="55" y1="257.5" x2="290" y2="257.5" stroke="#d2d2d2" stroke-width="1"/>
<text x="55.0" y="282.8" font-size="15" font-weight="700" fill="#151515" textLength="126.0" lengthAdjust="spacingAndGlyphs">Show metrics by:</text>
<rect x="55.5" y="299.5" width="12" height="12" rx="2" fill="#fff" stroke="#767676"/>
<text x="78.5" y="312.0" font-size="15" font-weight="700" fill="#151515" textLength="98.0" lengthAdjust="spacingAndGlyphs">Local version</text>
<rect x="55" y="328" width="13" height="13" rx="2" fill="#0075ff"/>
<path d="M58 334.8L60.3 337.2L65.2 331.6" stroke="#fff" stroke-width="2" fill="none"/>
<text x="78.5" y="341.0" font-size="15" font-weight="700" fill="#151515" textLength="146.0" lengthAdjust="spacingAndGlyphs">Remote namespace</text>
<rect x="73" y="357" width="13" height="13" rx="2" fill="#0075ff"/>
<path d="M76 363.8L78.3 366.2L83.2 360.6" stroke="#fff" stroke-width="2" fill="none"/>
<text x="96.8" y="370.0" font-size="15" font-weight="700" fill="#151515" textLength="102.5" lengthAdjust="spacingAndGlyphs">travel-agency</text>
<rect x="55.5" y="386.5" width="12" height="12" rx="2" fill="#fff" stroke="#767676"/>
<text x="78.5" y="399.0" font-size="15" font-weight="700" fill="#151515" textLength="114.5" lengthAdjust="spacingAndGlyphs">Remote service</text>
<rect x="55" y="415" width="13" height="13" rx="2" fill="#0075ff"/>
<path d="M58 421.8L60.3 424.2L65.2 418.6" stroke="#fff" stroke-width="2" fill="none"/>
<text x="78.5" y="428.0" font-size="15" font-weight="700" fill="#151515" textLength="90.0" lengthAdjust="spacingAndGlyphs">Remote app</text>
<rect x="73" y="444" width="13" height="13" rx="2" fill="#0075ff"/>
<path d="M76 450.8L78.3 453.2L83.2 447.6" stroke="#fff" stroke-width="2" fill="none"/>
<text x="96.8" y="457.0" font-size="15" font-weight="700" fill="#151515" textLength="49.5" lengthAdjust="spacingAndGlyphs">travels</text>
<rect x="55" y="473" width="13" height="13" rx="2" fill="#0075ff"/>
<path d="M58 479.8L60.3 482.2L65.2 476.6" stroke="#fff" stroke-width="2" fill="none"/>
<text x="78.5" y="486.0" font-size="15" font-weight="700" fill="#151515" textLength="116.0" lengthAdjust="spacingAndGlyphs">Remote version</text>
<rect x="73" y="502" width="13" height="13" rx="2" fill="#0075ff"/>
<path d="M76 508.8L78.3 511.2L83.2 505.6" stroke="#fff" stroke-width="2" fill="none"/>
<text x="96.8" y="515.0" font-size="15" font-weight="700" fill="#151515" textLength="14.0" lengthAdjust="spacingAndGlyphs">v1</text>
<rect x="73" y="531" width="13" height="13" rx="2" fill="#0075ff"/>
<path d="M76 537.8L78.3 540.2L83.2 534.6" stroke="#fff" stroke-width="2" fill="none"/>
<text x="96.8" y="544.0" font-size="15" font-weight="700" fill="#151515" textLength="17.5" lengthAdjust="spacingAndGlyphs">v2</text>
<rect x="73" y="560" width="13" height="13" rx="2" fill="#0075ff"/>
<path d="M76 566.8L78.3 569.2L83.2 563.6" stroke="#fff" stroke-width="2" fill="none"/>
<text x="96.8" y="573.0" font-size="15" font-weight="700" fill="#151515" textLength="17.5" lengthAdjust="spacingAndGlyphs">v3</text>
<rect x="55" y="589" width="13" height="13" rx="2" fill="#0075ff"/>
<path d="M58 595.8L60.3 598.2L65.2 592.6" stroke="#fff" stroke-width="2" fill="none"/>
<text x="78.5" y="602.0" font-size="15" font-weight="700" fill="#151515" textLength="112.5" lengthAdjust="spacingAndGlyphs">Response code</text>
<rect x="73" y="618" width="13" height="13" rx="2" fill="#0075ff"/>
<path d="M76 624.8L78.3 627.2L83.2 621.6" stroke="#fff" stroke-width="2" fill="none"/>
<text x="96.8" y="631.0" font-size="15" font-weight="700" fill="#151515" textLength="30.5" lengthAdjust="spacingAndGlyphs">200</text>
<rect x="73" y="647" width="13" height="13" rx="2" fill="#0075ff"/>
<path d="M76 653.8L78.3 656.2L83.2 650.6" stroke="#fff" stroke-width="2" fill="none"/>
<text x="96.8" y="660.0" font-size="15" font-weight="700" fill="#151515" textLength="30.5" lengthAdjust="spacingAndGlyphs">403</text>
<rect x="55.5" y="676.5" width="12" height="12" rx="2" fill="#fff" stroke="#767676"/>
<text x="78.5" y="689.0" font-size="15" font-weight="700" fill="#151515" textLength="95.5" lengthAdjust="spacingAndGlyphs">GRPC status</text>
<rect x="55.5" y="705.5" width="12" height="12" rx="2" fill="#fff" stroke="#767676"/>
<text x="78.5" y="718.0" font-size="15" font-weight="700" fill="#151515" textLength="112.5" lengthAdjust="spacingAndGlyphs">Response flags</text>
<text x="55.3" y="762.7" font-size="15" font-weight="700" fill="#151515" textLength="89.8" lengthAdjust="spacingAndGlyphs">Histograms:</text>
<rect x="55" y="779.5" width="13" height="13" rx="2" fill="#0075ff"/>
<path d="M58 786.3L60.3 788.7L65.2 783.1" stroke="#fff" stroke-width="2" fill="none"/>
<text x="78.5" y="791.5" font-size="15" font-weight="700" fill="#151515" textLength="60.5" lengthAdjust="spacingAndGlyphs">Average</text>
</svg>
<div class="a" style="left:0;top:0;width:1690px;height:1px;background:#000"></div>
<div class="a" style="left:0;top:2px;width:16px;height:789px;background:linear-gradient(to right,rgba(0,0,0,.07),rgba(0,0,0,.03) 40%,rgba(0,0,0,0))"></div>
</body></html>
